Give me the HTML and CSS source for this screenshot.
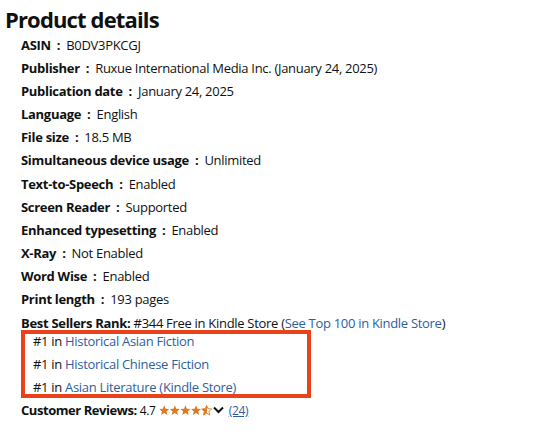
FILE: index.html
```html
<!DOCTYPE html>
<html>
<head>
<meta charset="utf-8">
<link rel="stylesheet" href="styles.css">
</head>
<body>
<div class="page">
  <h2 class="title">Product details</h2>
  <ul class="details">
    <li><span class="label">ASIN</span><span class="colon">:</span><span class="value">B0DV3PKCGJ</span></li>
    <li><span class="label">Publisher</span><span class="colon">:</span><span class="value">Ruxue International Media Inc. (January 24, 2025)</span></li>
    <li><span class="label">Publication date</span><span class="colon">:</span><span class="value">January 24, 2025</span></li>
    <li><span class="label">Language</span><span class="colon">:</span><span class="value">English</span></li>
    <li><span class="label">File size</span><span class="colon">:</span><span class="value">18.5 MB</span></li>
    <li><span class="label">Simultaneous device usage</span><span class="colon">:</span><span class="value">Unlimited</span></li>
    <li><span class="label">Text-to-Speech</span><span class="colon">:</span><span class="value">Enabled</span></li>
    <li><span class="label">Screen Reader</span><span class="colon">:</span><span class="value">Supported</span></li>
    <li><span class="label">Enhanced typesetting</span><span class="colon">:</span><span class="value">Enabled</span></li>
    <li><span class="label">X-Ray</span><span class="colon">:</span><span class="value">Not Enabled</span></li>
    <li><span class="label">Word Wise</span><span class="colon">:</span><span class="value">Enabled</span></li>
    <li><span class="label">Print length</span><span class="colon">:</span><span class="value">193 pages</span></li>
  </ul>
  <div class="rank">
    <div class="rank-line"><span class="label">Best Sellers Rank:</span> #344 Free in Kindle Store (<a class="link">See Top 100 in Kindle Store</a>)</div>
    <ul class="rank-list">
      <li>#1 in <a class="link">Historical Asian Fiction</a></li>
      <li>#1 in <a class="link">Historical Chinese Fiction</a></li>
      <li>#1 in <a class="link">Asian Literature (Kindle Store)</a></li>
    </ul>
  </div>
  <div class="reviews">
    <span class="label rv">Customer Reviews:</span>
    <span class="score">4.7</span>
    <span class="stars">
      <svg width="53" height="11" viewBox="0 0 53 11">
        <defs>
          <path id="st" d="M5.25 0.3 L6.6 3.7 L10.2 4 L7.5 6.4 L8.4 10 L5.25 8.1 L2.1 10 L3 6.4 L0.3 4 L3.9 3.7 Z"/>
          <clipPath id="half"><rect x="0" y="0" width="5.5" height="11"/></clipPath>
        </defs>
        <use href="#st" x="0" fill="#de7921"/>
        <use href="#st" x="10.6" fill="#de7921"/>
        <use href="#st" x="21.2" fill="#de7921"/>
        <use href="#st" x="31.8" fill="#de7921"/>
        <g transform="translate(42.4 0)">
          <use href="#st" fill="none" stroke="#de7921" stroke-width="0.9"/>
          <use href="#st" fill="#de7921" clip-path="url(#half)"/>
        </g>
      </svg>
      <svg class="chev" width="11" height="8" viewBox="0 0 11 8"><path d="M1 1.5 L5.5 6 L10 1.5" fill="none" stroke="#0f1111" stroke-width="2"/></svg>
    </span>
    <a class="link count">(24)</a>
  </div>
</div>
</body>
</html>
```

FILE: styles.css
```css
* { box-sizing: border-box; }
html, body { margin: 0; padding: 0; background: #ffffff; }
body {
  font-family: "Open Sans", "Noto Sans", Arial, sans-serif;
  color: #0f1111;
  font-size: 13px;
  letter-spacing: -0.3px;
}
.page {
  padding: 5px 0 0 5px;
  width: 544px;
  height: 436px;
  overflow: hidden;
}
.title {
  margin: 0;
  font-size: 22px;
  font-weight: 700;
  line-height: 29px;
  letter-spacing: -0.85px;
}
.details {
  list-style: none;
  margin: 0;
  padding: 0 0 0 16px;
}
.details li {
  height: 23.1px;
  line-height: 23px;
  white-space: nowrap;
}
.label { font-weight: 700; }
.colon { font-weight: 700; margin: 0 6px 0 6px; }
.value { color: #0f1111; }
.rank { padding-left: 16px; }
.rank-line {
  line-height: 23px;
  margin-top: 1.3px;
  margin-bottom: -5px;
  white-space: nowrap;
  position: relative;
}
.rank-list {
  list-style: none;
  margin: 0;
  padding: 0 0 0 8px;
  width: 290px;
  height: 68px;
  border: 4px solid #e8431a;
}
.rank-list li {
  line-height: 23px;
  height: 23px;
  white-space: nowrap;
}
.rank-list li:first-child { margin-top: -4.5px; }
.link { color: #2d5e9e; text-decoration: none; }
.reviews {
  padding-left: 16px;
  line-height: 23px;
  margin-top: 0.5px;
  display: flex;
  align-items: center;
  white-space: nowrap;
}
.rv { letter-spacing: -0.45px; }
.score { margin-left: 3px; font-size: 12px; }
.stars { display: inline-flex; align-items: center; margin-left: 3px; gap: 1px; }
.count { margin-left: 5px; text-decoration: underline; font-size: 12px; }
```
